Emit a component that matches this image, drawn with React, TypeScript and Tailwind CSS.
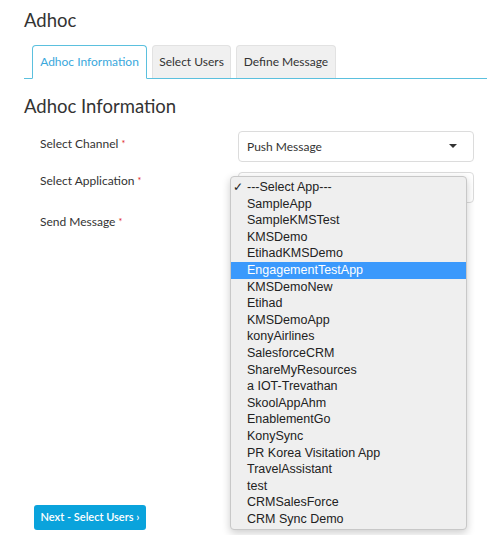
const APPS = [
  "---Select App---",
  "SampleApp",
  "SampleKMSTest",
  "KMSDemo",
  "EtihadKMSDemo",
  "EngagementTestApp",
  "KMSDemoNew",
  "Etihad",
  "KMSDemoApp",
  "konyAirlines",
  "SalesforceCRM",
  "ShareMyResources",
  "a IOT-Trevathan",
  "SkoolAppAhm",
  "EnablementGo",
  "KonySync",
  "PR Korea Visitation App",
  "TravelAssistant",
  "test",
  "CRMSalesForce",
  "CRM Sync Demo",
];

const font = { fontFamily: 'Lato, "Open Sans", sans-serif' };

function Label({ text, pad }: { text: string; pad: string }) {
  return (
    <div className={`w-[214px] pl-4 text-[12px] leading-[16px] text-[#333] ${pad}`}>
      {text} <span className="text-[#e02020] text-[9px] align-top">*</span>
    </div>
  );
}

export default function App() {
  return (
    <div className="relative w-[487px] h-[535px] bg-white text-[#333] overflow-hidden" style={font}>
      <div className="pl-6 pt-[7px]">
        <h1 className="text-[18.5px] leading-[26px] text-[#333]">Adhoc</h1>

        <div className="mt-[12px] flex items-end border-b border-[#5bc0de] pl-2 gap-[5px] h-[34px]">
          <div className="h-[34px] w-[115px] -mb-px flex items-center justify-center rounded-t-[4px] border border-[#5bc0de] border-b-white bg-white text-[12px] text-[#3aa8dc]">
            Adhoc Information
          </div>
          <div className="h-[33px] w-[79px] flex items-center justify-center rounded-t-[4px] border border-[#e2e2e2] border-b-0 bg-[#f0f0f0] text-[12px] text-[#333]">
            Select Users
          </div>
          <div className="h-[33px] w-[100px] flex items-center justify-center rounded-t-[4px] border border-[#e2e2e2] border-b-0 bg-[#f0f0f0] text-[12px] text-[#333]">
            Define Message
          </div>
        </div>

        <h2 className="mt-[14px] text-[18.5px] leading-[26px] text-[#333]">Adhoc Information</h2>

        <div className="mt-[12px] flex flex-col">
          <div className="flex items-start">
            <Label text="Select Channel" pad="pt-[5px]" />
            <div className="w-[236px] h-[31px] border border-[#dcdcdc] rounded-[4px] flex items-center justify-between pl-[8px] pr-[16px] text-[12px]">
              <span>Push Message</span>
              <svg width="8" height="5" viewBox="0 0 8 5"><path d="M0 0 H8 L4 4 Z" fill="#333" /></svg>
            </div>
          </div>
          <div className="flex items-start mt-[10px]">
            <Label text="Select Application" pad="pt-[1px]" />
            <div className="w-[236px] h-[31px] border border-[#dcdcdc] rounded-[4px]" />
          </div>
          <div className="flex items-start mt-[11px]">
            <Label text="Send Message" pad="" />
          </div>
        </div>

        <button className="absolute left-[34px] top-[505px] h-[25px] w-[112px] rounded-[3px] bg-[#0aa3dc] text-white text-[11px] font-semibold">
          Next - Select Users ›
        </button>
      </div>

      <div
        className="absolute left-[230px] top-[176px] w-[237px] h-[354px] bg-[#efefef] border border-[#c8c8c8] rounded-[4px] shadow-[0_3px_8px_rgba(0,0,0,0.2)] pt-[2px]"
        style={{ fontFamily: '"Liberation Sans", Arial, sans-serif' }}
      >
        {APPS.map((a, i) => (
          <div
            key={a}
            className={
              i === 5
                ? "relative h-[16.6px] leading-[16.6px] pl-[16px] text-[12.5px] bg-[#3b99fc] text-white"
                : "relative h-[16.6px] leading-[16.6px] pl-[16px] text-[12.5px] text-[#222]"
            }
          >
            {i === 0 && <span className="absolute left-[2px] text-[12px]">✓</span>}
            {a}
          </div>
        ))}
      </div>
    </div>
  );
}
